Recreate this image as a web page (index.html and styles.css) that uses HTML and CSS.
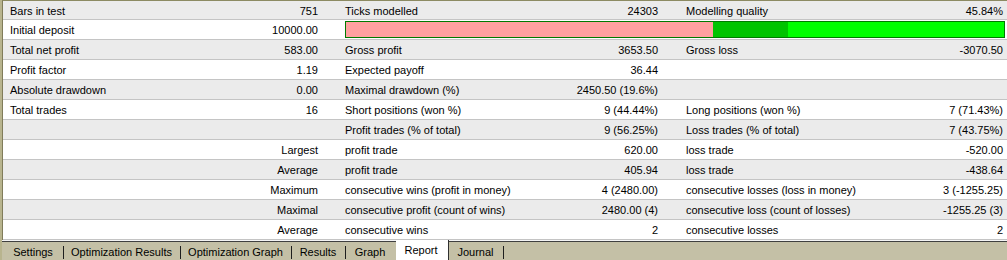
FILE: index.html
```html
<!DOCTYPE html>
<html>
<head>
<meta charset="utf-8">
<link rel="stylesheet" href="styles.css">
</head>
<body>
<div class="report">
  <div class="row gray"><div class="lbl">Bars in test</div><div class="val">751</div><div class="lbl l2">Ticks modelled</div><div class="val">24303</div><div class="lbl l3">Modelling quality</div><div class="val v3">45.84%</div></div>
  <div class="row"><div class="lbl">Initial deposit</div><div class="val">10000.00</div>
    <div class="quality"><div class="seg pink" style="width:367px"></div><div class="seg dgreen" style="width:75px"></div><div class="seg bgreen" style="flex:1"></div></div>
  </div>
  <div class="row gray"><div class="lbl">Total net profit</div><div class="val">583.00</div><div class="lbl l2">Gross profit</div><div class="val">3653.50</div><div class="lbl l3">Gross loss</div><div class="val v3">-3070.50</div></div>
  <div class="row"><div class="lbl">Profit factor</div><div class="val">1.19</div><div class="lbl l2">Expected payoff</div><div class="val">36.44</div><div class="lbl l3"></div><div class="val v3"></div></div>
  <div class="row gray"><div class="lbl">Absolute drawdown</div><div class="val">0.00</div><div class="lbl l2">Maximal drawdown (%)</div><div class="val">2450.50 (19.6%)</div><div class="lbl l3"></div><div class="val v3"></div></div>
  <div class="row"><div class="lbl">Total trades</div><div class="val">16</div><div class="lbl l2">Short positions (won %)</div><div class="val">9 (44.44%)</div><div class="lbl l3">Long positions (won %)</div><div class="val v3">7 (71.43%)</div></div>
  <div class="row gray"><div class="lbl"></div><div class="val"></div><div class="lbl l2">Profit trades (% of total)</div><div class="val">9 (56.25%)</div><div class="lbl l3">Loss trades (% of total)</div><div class="val v3">7 (43.75%)</div></div>
  <div class="row"><div class="lbl"></div><div class="val">Largest</div><div class="lbl l2">profit trade</div><div class="val">620.00</div><div class="lbl l3">loss trade</div><div class="val v3">-520.00</div></div>
  <div class="row gray"><div class="lbl"></div><div class="val">Average</div><div class="lbl l2">profit trade</div><div class="val">405.94</div><div class="lbl l3">loss trade</div><div class="val v3">-438.64</div></div>
  <div class="row"><div class="lbl"></div><div class="val">Maximum</div><div class="lbl l2">consecutive wins (profit in money)</div><div class="val">4 (2480.00)</div><div class="lbl l3">consecutive losses (loss in money)</div><div class="val v3">3 (-1255.25)</div></div>
  <div class="row gray"><div class="lbl"></div><div class="val">Maximal</div><div class="lbl l2">consecutive profit (count of wins)</div><div class="val">2480.00 (4)</div><div class="lbl l3">consecutive loss (count of losses)</div><div class="val v3">-1255.25 (3)</div></div>
  <div class="row last"><div class="lbl"></div><div class="val">Average</div><div class="lbl l2">consecutive wins</div><div class="val">2</div><div class="lbl l3">consecutive losses</div><div class="val v3">2</div></div>
</div>
<div class="tabs">
  <div class="tab w1">Settings</div>
  <div class="tab w2">Optimization Results</div>
  <div class="tab w3">Optimization Graph</div>
  <div class="tab w4">Results</div>
  <div class="tab w5 nosep">Graph</div>
  <div class="tab w6 active">Report</div>
  <div class="tab w7">Journal</div>
</div>
</body>
</html>
```
FILE: styles.css
```css
* { box-sizing: border-box; }
html, body { margin: 0; padding: 0; background: #ffffff; }
body {
  width: 1007px;
  height: 260px;
  overflow: hidden;
  border-left: 2px solid #b8b48e;
  position: relative;
}
.report {
  border-left: 1px solid #807c5a;
  border-top: 1px solid #8c8a62;
  font-family: "Liberation Sans", Arial, sans-serif;
  font-size: 11px;
  color: #000;
}
.row {
  display: grid;
  grid-template-columns: 172px 144px 181px 159px 171px 175px;
  height: 20px;
  border-bottom: 1px solid #c4c4c4;
  background: #ffffff;
  line-height: 17px;
  white-space: nowrap;
}
.row:first-child { height: 19px; }
.row.gray { background: #ebebeb; }
.lbl { padding-left: 7px; padding-top: 2px; }
.lbl.l2 { padding-left: 26px; }
.lbl.l3 { padding-left: 27px; }
.val { text-align: right; padding-right: 1px; padding-top: 2px; }
.val.v3 { padding-right: 2px; }
.quality {
  grid-column: 3 / 7;
  margin: 1px 0 0 26px;
  width: 660px;
  height: 17px;
  border: 1px solid #007a00;
  display: flex;
}
.seg { height: 100%; }
.pink { background: #ffa0a0; }
.dgreen { background: #00c400; }
.bgreen { background: #00ff00; }
.tabs {
  display: flex;
  height: 20px;
  background: #c4c0a6;
  border-top: 1px solid #f4f4f4;
  box-shadow: inset 0 1px 0 #404040;
  padding-left: 2px;
  font-family: "Liberation Sans", Arial, sans-serif;
  font-size: 11px;
  color: #000;
}
.tab {
  position: relative;
  text-align: center;
  padding-right: 2px;
  padding-top: 5px;
  line-height: 13px;
  white-space: nowrap;
}
.tab::after {
  content: "";
  position: absolute;
  right: 0;
  top: 5px;
  width: 1px;
  height: 13px;
  background: #1e1e1e;
}
.tab.nosep::after, .tab.active::after { display: none; }
.tab.active {
  background: #ffffff;
  margin-top: -1px;
  padding-top: 4px;
  border-right: 1px solid #303030;
}
.w1 { width: 60px; }
.w2 { width: 117px; }
.w3 { width: 111px; }
.w4 { width: 54px; }
.w5 { width: 50px; }
.w6 { width: 53px; }
.w7 { width: 55px; }
```
